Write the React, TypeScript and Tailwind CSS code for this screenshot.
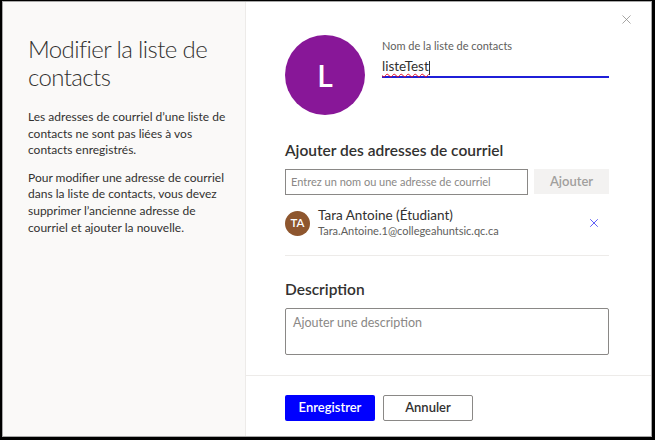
import { X } from 'lucide-react'

const font = { fontFamily: 'Lato, "Open Sans", sans-serif' }

function ContactRow() {
  return (
    <div className="flex items-center mt-[15px] h-[26px]">
      <div className="w-[25px] h-[25px] rounded-full bg-[#8e562e] flex items-center justify-center text-white text-[11.5px] font-semibold">
        TA
      </div>
      <div className="flex flex-col ml-[8px] leading-[15px]">
        <span className="text-[13.5px] text-[#323130]">Tara Antoine (Étudiant)</span>
        <span className="text-[11px] text-[#605e5c]">Tara.Antoine.1@collegeahuntsic.qc.ca</span>
      </div>
      <button className="ml-auto mr-[8px] text-[#3b3bf5]">
        <X size={14} strokeWidth={1.4} />
      </button>
    </div>
  )
}

export default function App() {
  return (
    <div style={font} className="w-[655px] h-[440px] bg-black pl-[2px] pt-[1px] pr-[3px] pb-[3px]">
      <div className="flex h-full border border-[#a8a8a8] bg-white">
        {/* left info panel */}
        <div className="w-[243px] shrink-0 bg-[#faf9f8] border-r border-[#edebe9] pl-[25px] pr-[10px] pt-[33px]">
          <h1 className="text-[24px] leading-[28px] font-light tracking-[-0.6px] text-[#323130]">Modifier la liste de contacts</h1>
          <p className="mt-[18px] text-[12px] leading-[16.5px] text-[#323130]">
            Les adresses de courriel d’une liste de contacts ne sont pas liées à vos contacts enregistrés.
          </p>
          <p className="mt-[11px] text-[12px] leading-[16.8px] text-[#323130]">
            Pour modifier une adresse de courriel dans la liste de contacts, vous devez supprimer l’ancienne adresse de courriel et ajouter la nouvelle.
          </p>
        </div>

        {/* right form panel */}
        <div className="relative flex-1 flex flex-col">
          <button className="absolute top-[10px] right-[17px] text-[#8a8886]">
            <X size={15} strokeWidth={1.2} />
          </button>
          <div className="flex-1 pl-[39px] pr-[42px] pt-[33px]">
            <div className="flex">
              <div className="w-[80px] h-[80px] rounded-full bg-[#881798] flex items-center justify-center text-white text-[30px] font-semibold">
                L
              </div>
              <div className="flex-1 ml-[17px] pt-[4px]">
                <div className="text-[11px] leading-[14px] text-[#605e5c]">Nom de la liste de contacts</div>
                <div className="mt-[4px] h-[21px] border-b-2 border-[#1f1fd8] text-[13.5px] leading-[18px] text-[#323130]">
                  <span className="underline decoration-wavy decoration-[#e81123] decoration-1 underline-offset-2">listeTest</span>
                  <span className="inline-block w-px h-[14px] bg-[#323130] align-middle" />
                </div>
              </div>
            </div>

            <h2 className="mt-[25px] text-[15.5px] leading-[20px] font-semibold text-[#323130]">Ajouter des adresses de courriel</h2>
            <div className="flex mt-[9px] gap-[6px]">
              <div className="flex-1 h-[26px] border border-[#8a8886] flex items-center px-[5px] text-[11px] text-[#8a8886]">
                Entrez un nom ou une adresse de courriel
              </div>
              <button className="w-[75px] h-[25px] bg-[#f3f2f1] text-[13px] font-semibold text-[#a19f9d]">Ajouter</button>
            </div>
            <ContactRow />
            <div className="mt-[19px] border-t border-[#edebe9]" />

            <h2 className="mt-[23px] text-[15.5px] leading-[20px] font-semibold text-[#323130]">Description</h2>
            <div className="mt-[9px] h-[47px] border border-[#8a8886] rounded-[2px] px-[7px] pt-[5px] text-[12.5px] text-[#8a8886]">
              Ajouter une description
            </div>
          </div>

          <div className="border-t border-[#edebe9] pl-[39px] pt-[19px] pb-[15px] flex gap-[8px]">
            <button className="w-[90px] h-[26px] rounded-[2px] bg-[#0000ff] text-white text-[13px] font-semibold">Enregistrer</button>
            <button className="w-[90px] h-[26px] rounded-[2px] border border-[#8a8886] bg-white text-[#323130] text-[13px] font-semibold">Annuler</button>
          </div>
        </div>
      </div>
    </div>
  )
}
